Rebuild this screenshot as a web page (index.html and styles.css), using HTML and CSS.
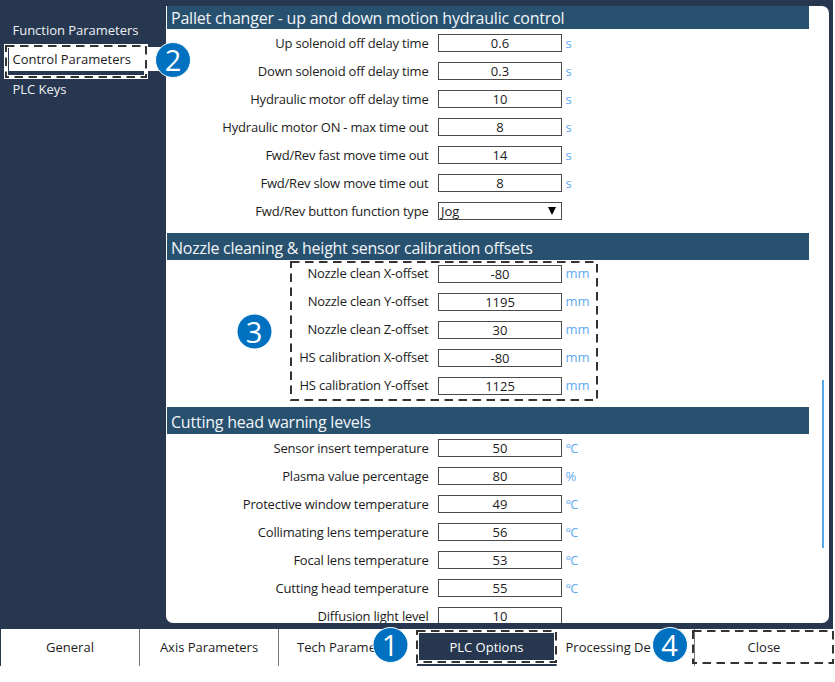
FILE: index.html
```html
<!DOCTYPE html>
<html lang="en">
<head>
<meta charset="utf-8">
<title>PLC Options</title>
<link rel="stylesheet" href="styles.css">
</head>
<body>
<div class="window">
  <div class="workspace">
    <nav class="sidebar">
      <a class="nav-item">Function Parameters</a>
      <a class="nav-item selected">Control Parameters</a>
      <a class="nav-item">PLC Keys</a>
    </nav>
    <main class="panel">
      <section>
        <h2 class="first">Pallet changer - up and down motion hydraulic control</h2>
        <div class="row"><label>Up solenoid off delay time</label><span class="field">0.6</span><span class="unit">s</span></div>
        <div class="row"><label>Down solenoid off delay time</label><span class="field">0.3</span><span class="unit">s</span></div>
        <div class="row"><label>Hydraulic motor off delay time</label><span class="field">10</span><span class="unit">s</span></div>
        <div class="row"><label>Hydraulic motor ON - max time out</label><span class="field">8</span><span class="unit">s</span></div>
        <div class="row"><label>Fwd/Rev fast move time out</label><span class="field">14</span><span class="unit">s</span></div>
        <div class="row"><label>Fwd/Rev slow move time out</label><span class="field">8</span><span class="unit">s</span></div>
        <div class="row"><label>Fwd/Rev button function type</label><span class="field select">Jog<svg class="arrow" width="8" height="8" viewBox="0 0 8 8"><path d="M0 0H8L4 8Z"/></svg></span></div>
      </section>
      <section class="offsets">
        <h2>Nozzle cleaning &amp; height sensor calibration offsets</h2>
        <div class="row"><label>Nozzle clean X-offset</label><span class="field">-80</span><span class="unit">mm</span></div>
        <div class="row"><label>Nozzle clean Y-offset</label><span class="field">1195</span><span class="unit">mm</span></div>
        <div class="row"><label>Nozzle clean Z-offset</label><span class="field">30</span><span class="unit">mm</span></div>
        <div class="row"><label>HS calibration X-offset</label><span class="field">-80</span><span class="unit">mm</span></div>
        <div class="row"><label>HS calibration Y-offset</label><span class="field">1125</span><span class="unit">mm</span></div>
      </section>
      <section>
        <h2>Cutting head warning levels</h2>
        <div class="row"><label>Sensor insert temperature</label><span class="field">50</span><span class="unit tight">°C</span></div>
        <div class="row"><label>Plasma value percentage</label><span class="field">80</span><span class="unit tight">%</span></div>
        <div class="row"><label>Protective window temperature</label><span class="field">49</span><span class="unit tight">°C</span></div>
        <div class="row"><label>Collimating lens temperature</label><span class="field">56</span><span class="unit tight">°C</span></div>
        <div class="row"><label>Focal lens temperature</label><span class="field">53</span><span class="unit tight">°C</span></div>
        <div class="row"><label>Cutting head temperature</label><span class="field">55</span><span class="unit tight">°C</span></div>
        <div class="row"><label>Diffusion light level</label><span class="field">10</span></div>
      </section>
      <div class="scrollbar"></div>
    </main>
  </div>
  <footer class="tabs">
    <a class="tab">General</a>
    <a class="tab">Axis Parameters</a>
    <a class="tab tech">Tech Parame</a>
    <a class="tab active">PLC Options</a>
    <a class="tab processing">Processing De</a>
    <a class="tab">Close</a>
  </footer>
  <svg class="callouts" width="835" height="682" viewBox="0 0 835 682">
    <g class="halo">
      <rect x="6" y="46" width="140" height="31"/>
      <rect x="417" y="631" width="139" height="31"/>
    </g>
    <g class="dashes">
      <rect x="6" y="46" width="140" height="31"/>
      <rect x="291" y="262" width="306" height="138"/>
      <rect x="417" y="631" width="139" height="31"/>
      <rect x="693" y="631" width="140" height="32"/>
    </g>
    <g class="badges">
      <circle cx="390.500" cy="645" r="17.500"/><text x="390" y="656">1</text>
      <circle cx="173" cy="60" r="17.500"/><text x="173" y="71">2</text>
      <circle cx="254.500" cy="331.500" r="17.500"/><text x="254" y="342.500">3</text>
      <circle cx="670" cy="645" r="17.500"/><text x="669.500" y="656">4</text>
    </g>
  </svg>
</div>
</body>
</html>
```
FILE: styles.css
```css
* { box-sizing: border-box; }
body {
  margin: 0;
  background: #fff;
  font-family: "Open Sans", "Noto Sans", sans-serif;
  font-size: 13px;
  color: #1c1c1c;
}
.window { position: relative; width: 835px; height: 682px; overflow: hidden; }
.workspace {
  display: flex;
  width: 833px;
  height: 629px;
  padding: 6px 4px 6.500px 0;
  background: #26374f;
}
.sidebar { width: 166px; padding: 12px 0 0 9px; }
.nav-item {
  display: flex;
  align-items: center;
  height: 24px;
  margin-bottom: 5px;
  padding-left: 3.500px;
  color: #eef1f5;
  letter-spacing: -0.02px;
}
.nav-item.selected { background: #fff; color: #1c1c1c; }
.nav-item:last-child { padding-top: 1px; }
.panel {
  position: relative;
  flex: 1;
  padding-left: 1px;
  overflow: hidden;
  background: #fff;
  border-radius: 0 7px 7px 7px;
}
h2 {
  width: 642px;
  height: 27px;
  margin: 0;
  padding-left: 4px;
  background: #28506f;
  color: #f2f6f9;
  font-size: 16px;
  font-weight: 400;
  letter-spacing: -0.22px;
  line-height: 30px;
}
.offsets h2 { letter-spacing: -0.26px; }
h2.first { height: 23px; line-height: 24px; }
section { margin-bottom: 7px; }
section:first-child { margin-bottom: 8px; }
.row { display: flex; align-items: center; height: 28px; }
.row label {
  width: 261.500px;
  text-align: right;
  white-space: nowrap;
  letter-spacing: -0.21px;
}
.field {
  width: 124px;
  height: 18px;
  margin-left: 9.500px;
  border: 1px solid #4a4a4a;
  line-height: 17px;
  text-align: center;
}
.offsets label, .offsets .unit { padding-bottom: 2px; }
.offsets .field { line-height: 16px; }
.field.select {
  display: flex;
  align-items: center;
  justify-content: space-between;
  padding: 0 5px 0 2px;
}
.unit { margin-left: 3.500px; color: #5faaf0; }
.unit.tight { letter-spacing: -0.9px; }
.scrollbar {
  position: absolute;
  top: 374px;
  right: 5px;
  width: 2px;
  height: 168px;
  background: #55a8ee;
}
.tabs {
  display: grid;
  grid-template-columns: 139px 139px 138px 140px 138px 138px;
  width: 833px;
  height: 37px;
  border-left: 1px solid #26374f;
}
.tab {
  display: flex;
  align-items: center;
  justify-content: center;
  padding-bottom: 1px;
  border-right: 1px solid #777;
  white-space: nowrap;
}
.tab.tech { justify-content: flex-start; padding-left: 18px; border-right: 0; }
.tab.active { background: #26374f; color: #fff; }
.tab.processing { justify-content: flex-start; padding-left: 8.500px; }
.tab:last-child { border-right: 0; }
.callouts { position: absolute; inset: 0; }
.halo rect { fill: none; stroke: #fff; stroke-width: 4; }
.dashes rect { fill: none; stroke: #333; stroke-width: 2; stroke-dasharray: 8.500 5.500; }
.badges circle { fill: #0071c1; stroke: #fff; stroke-width: 1; }
.badges text { fill: #fff; font-size: 29px; text-anchor: middle; }
```
